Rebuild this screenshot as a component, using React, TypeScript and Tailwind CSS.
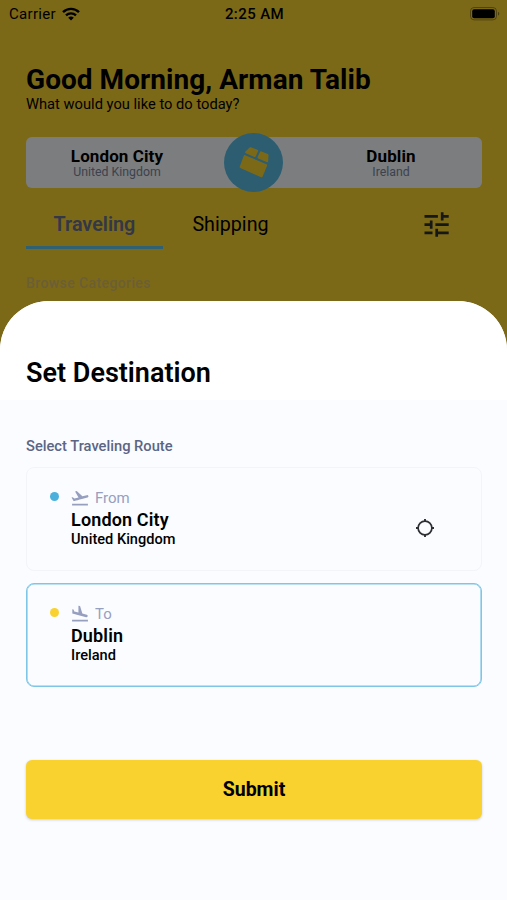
import type { ReactNode } from "react";
import { MdFlightLand, MdFlightTakeoff } from "react-icons/md";

type Place = { city: string; country: string };

const from: Place = { city: "London City", country: "United Kingdom" };
const to: Place = { city: "Dublin", country: "Ireland" };

function WifiIcon() {
  return (
    <svg width="18" height="14" viewBox="0 0 18 14" fill="none" stroke="black">
      <path d="M1 5.2a11.4 11.4 0 0 1 16 0" strokeWidth="2.4" />
      <path d="M4 8.4a7.1 7.1 0 0 1 10 0" strokeWidth="2.3" />
      <path d="M9 13.6 6.2 10.8a4 4 0 0 1 5.6 0z" fill="black" stroke="none" />
    </svg>
  );
}

function BatteryIcon() {
  return (
    <svg width="30" height="14" viewBox="0 0 30 14">
      <rect x="0.5" y="0.5" width="26" height="12.4" rx="3.6" fill="none" stroke="black" strokeOpacity="0.35" />
      <rect x="2.2" y="2.2" width="22.6" height="9" rx="2" fill="black" />
      <path d="M28 4.8c1.8.7 1.8 3.2 0 3.9z" fillOpacity="0.4" />
    </svg>
  );
}

function BoxIcon() {
  return (
    <svg
      width="59"
      height="59"
      viewBox="0 0 59 59"
      fill="#f9d230"
      stroke="#f9d230"
      strokeWidth="2.2"
      strokeLinejoin="round"
    >
      <path d="M26.4 15.4 33 17.9 30.8 22.9 22.2 19.2z" />
      <path d="M37 19.4 43.4 22.1 43.1 28.1 34.6 24.5z" />
      <path d="M20.8 23.2 42 32.3 37.6 43.2 16.8 34z" />
    </svg>
  );
}

function TuneIcon() {
  return (
    <svg width="25" height="25" viewBox="0 0 25 25" fill="none" stroke="#2c2e33" strokeWidth="2.7">
      <path d="M.5 4.4h13.4M16.9 4.4h7.8M18.2.3v8.3" />
      <path d="M.5 12.6h8M11.4 12.6h13.3M7.2 8.5v8.2" />
      <path d="M.5 20.9h8M11.4 20.9h13.3M12.7 16.8v8" />
    </svg>
  );
}

function LocateIcon() {
  return (
    <svg width="18" height="18" viewBox="0 0 18 18" fill="none" stroke="#2c2e33" strokeWidth="1.7">
      <circle cx="9" cy="9" r="6.9" />
      <path d="M9 0v3M9 15v3M0 9h3M15 9h3" strokeWidth="1.9" />
    </svg>
  );
}

function StatusBar() {
  return (
    <div className="grid h-7 grid-cols-3 items-center pr-[7px] pl-[9px] text-[15px]">
      <div className="flex items-center gap-[6px]">
        <span className="tracking-[0.3px]">Carrier</span>
        <WifiIcon />
      </div>
      <span className="text-center font-medium tracking-[0.4px]">2:25 AM</span>
      <div className="flex justify-end">
        <BatteryIcon />
      </div>
    </div>
  );
}

function PlaceLabel({ place }: { place: Place }) {
  return (
    <div className="w-[182px] pt-px text-center">
      <p className="text-[17px] leading-[18px] font-bold tracking-[0.1px]">{place.city}</p>
      <p className="text-[12.3px] leading-[14px] text-[#7a859c]">{place.country}</p>
    </div>
  );
}

function HomeScreen() {
  return (
    <header className="relative h-[350px] bg-[#f9d230]">
      <StatusBar />
      <div className="px-[26px]">
        <h1 className="mt-[35px] text-[28px] leading-[33px] font-bold tracking-[0.04px]">Good Morning, Arman Talib</h1>
        <p className="text-[14.7px] leading-[17px]">What would you like to do today?</p>

        <div className="mt-6 flex h-[51px] w-[456px] items-center justify-between rounded-[6px] bg-[#f9fbff]">
          <PlaceLabel place={from} />
          <div className="-my-1 -ml-px shrink-0 rounded-full bg-[#58bbe2]">
            <BoxIcon />
          </div>
          <PlaceLabel place={to} />
        </div>

        <div className="mt-[11px] flex h-[50px] text-[20px]">
          <div className="flex w-[137px] items-center justify-center border-b-[3px] border-[#5ec2e6] pt-[5px] text-[19.8px] font-semibold text-[#666f8c]">
            Traveling
          </div>
          <div className="flex w-[135px] items-center justify-center pt-[2px] text-[19.7px]">Shipping</div>
          <div className="ml-auto flex items-center pt-px pr-8">
            <TuneIcon />
          </div>
        </div>
        <p className="mt-[25px] text-[14px] leading-[18px] font-medium tracking-[0.4px] text-[#d6be68]">
          Browse Categories
        </p>
      </div>
      <div className="absolute inset-0 bg-black/50" />
    </header>
  );
}

type RouteCardProps = {
  label: string;
  place: Place;
  icon: ReactNode;
  dot: string;
  border: string;
  action?: ReactNode;
};

function RouteCard({ label, place, icon, dot, border, action }: RouteCardProps) {
  return (
    <div className={`flex h-[104px] w-[456px] rounded-[8px] border pt-[19px] pr-[47px] pl-[23px] ${border}`}>
      <div className="flex flex-1">
        <span className={`mt-[5px] mr-3 size-[9px] rounded-full ${dot}`} />
        <div>
          <div className="-ml-px flex h-[21px] items-center gap-[5px] text-[15px] text-[#979fbf]">
            {icon}
            <span className="pt-px">{label}</span>
          </div>
          <p className="mt-px text-[18px] leading-[22px] font-semibold tracking-[0.15px]">{place.city}</p>
          <p className="text-[14.6px] leading-[17px] font-medium">{place.country}</p>
        </div>
      </div>
      <div className="pt-8">{action}</div>
    </div>
  );
}

function DestinationSheet() {
  return (
    <section className="relative -mt-[49px] flex h-[599px] flex-col overflow-hidden rounded-t-[49px] bg-[#fafcff]">
      <div className="h-[99px] bg-white px-[26px] pt-[56px]">
        <h2 className="text-[27px] leading-8 font-semibold">Set Destination</h2>
      </div>
      <div className="px-[26px] pt-[37px]">
        <p className="text-[14.7px] leading-[18px] font-medium text-[#5c6584]">Select Traveling Route</p>
        <div className="mt-3 flex flex-col gap-3">
          <RouteCard
            label="From"
            place={from}
            icon={<MdFlightTakeoff size={20} />}
            dot="bg-[#4cb0dc]"
            border="border-[#f2f4f7]"
            action={<LocateIcon />}
          />
          <RouteCard
            label="To"
            place={to}
            icon={<MdFlightLand size={20} />}
            dot="bg-[#f9d230]"
            border="border-[#7ec5e6] shadow-[inset_0_0_0_0.6px_#7ec5e6]"
          />
        </div>
        <button className="mt-[73px] h-[59px] w-[456px] rounded-[6px] bg-[#f9d230] text-[19.5px] font-bold shadow-[0_1px_3px_rgba(0,0,0,0.18)]">
          Submit
        </button>
      </div>
    </section>
  );
}

export default function App() {
  return (
    <main className="h-[900px] w-[507px] overflow-hidden bg-[#f9d230] font-['Roboto',sans-serif] text-black">
      <HomeScreen />
      <DestinationSheet />
    </main>
  );
}
